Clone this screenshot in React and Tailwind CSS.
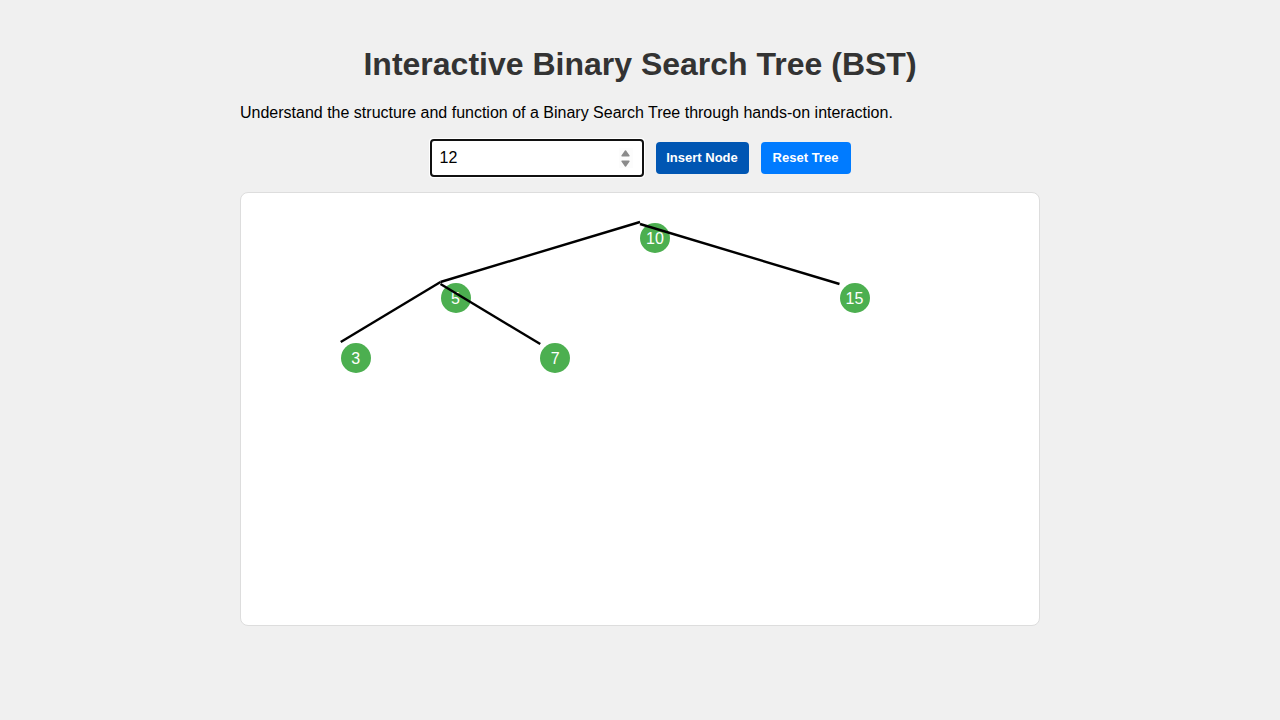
import { useState } from "react";

const LEVEL_HEIGHT = 60;
const TOP_OFFSET = 30;
const INITIAL_KEYS = [10, 5, 15, 3, 7];

function insert(node, key) {
  if (!node) return { key, left: null, right: null };
  if (key < node.key) return { ...node, left: insert(node.left, key) };
  if (key > node.key) return { ...node, right: insert(node.right, key) };
  return node;
}

// Horizontal positions are percentages; the spread halves on every level.
function layout(node, x = 50, spread = 25, depth = 0, out = { nodes: [], edges: [] }) {
  if (!node) return out;
  const y = TOP_OFFSET + depth * LEVEL_HEIGHT;
  out.nodes.push({ key: node.key, x, y });
  [
    [node.left, -1],
    [node.right, 1],
  ].forEach(([child, side]) => {
    if (!child) return;
    const childX = x + side * spread;
    out.edges.push({
      id: `${node.key}-${child.key}`,
      x1: x,
      y1: y + side,
      x2: childX,
      y2: y + LEVEL_HEIGHT + side,
    });
    layout(child, childX, spread / 2, depth + 1, out);
  });
  return out;
}

const buildTree = () => INITIAL_KEYS.reduce(insert, null);

export default function App() {
  const [tree, setTree] = useState(buildTree);
  const [value, setValue] = useState("12");
  const { nodes, edges } = layout(tree);

  const handleSubmit = (event) => {
    event.preventDefault();
    if (value !== "") setTree((current) => insert(current, Number(value)));
  };

  const step = (amount) => setValue((current) => String(Number(current) + amount));

  return (
    <div className="min-h-screen bg-[#f0f0f0] p-5 font-['Liberation_Sans',Arial,sans-serif] text-base text-black">
      <main className="mx-auto max-w-[800px] pt-6">
        <h1 className="text-center text-[32px] leading-10 font-bold text-[#333]">
          Interactive Binary Search Tree (BST)
        </h1>
        <p className="mt-[17px] leading-6">
          Understand the structure and function of a Binary Search Tree through hands-on interaction.
        </p>
        <form onSubmit={handleSubmit} className="mt-[14px] flex items-center justify-center gap-3">
          <div className="relative">
            <input
              type="number"
              aria-label="Node value"
              autoFocus
              value={value}
              onChange={(event) => setValue(event.target.value)}
              className="block h-[38px] w-[214px] rounded-xs border border-[#767676] bg-white px-[9px] caret-transparent [appearance:textfield] [&::-webkit-inner-spin-button]:appearance-none"
            />
            <div className="absolute inset-y-0 right-[11px] flex flex-col items-center justify-center">
              <button type="button" aria-label="Increase" tabIndex={-1} onClick={() => step(1)} className="flex h-[10px] w-[14px] items-center justify-center bg-[#fcfcfc]">
                <svg viewBox="0 0 9 7" className="h-[7px] w-[9px]" aria-hidden="true">
                  <path d="M4.5 1 8 5.8H1Z" fill="#8b8b8b" stroke="#8b8b8b" strokeWidth="1.4" strokeLinejoin="round" />
                </svg>
              </button>
              <button type="button" aria-label="Decrease" tabIndex={-1} onClick={() => step(-1)} className="flex h-[10px] w-[14px] items-center justify-center bg-[#fcfcfc]">
                <svg viewBox="0 0 9 7" className="h-[7px] w-[9px]" aria-hidden="true">
                  <path d="M4.5 6 8 1.2H1Z" fill="#8b8b8b" stroke="#8b8b8b" strokeWidth="1.4" strokeLinejoin="round" />
                </svg>
              </button>
            </div>
          </div>
          <button
            type="submit"
            className="w-[93px] rounded-sm bg-[#0056b3] py-2 text-[13px] leading-4 font-bold text-white"
          >
            Insert Node
          </button>
          <button
            type="button"
            onClick={() => setTree(null)}
            className="w-[90px] rounded-sm bg-[#007bff] py-2 text-[13px] leading-4 font-bold text-white"
          >
            Reset Tree
          </button>
        </form>
        <section
          aria-label="Tree"
          className="relative mt-[15px] box-content h-[60vh] overflow-hidden rounded-lg border border-[#ddd] bg-white"
        >
          {nodes.map((node) => (
            <div
              key={node.key}
              className="absolute flex size-[30px] items-center justify-center rounded-full bg-[#4caf50] pt-0.5 text-white"
              style={{ left: `${node.x}%`, top: node.y }}
            >
              {node.key}
            </div>
          ))}
          <svg className="absolute inset-0 size-full" aria-hidden="true">
            {edges.map((edge) => (
              <line
                key={edge.id}
                x1={`${edge.x1}%`}
                y1={edge.y1}
                x2={`${edge.x2}%`}
                y2={edge.y2}
                stroke="black"
                strokeWidth="2.4"
              />
            ))}
          </svg>
        </section>
      </main>
    </div>
  );
}
